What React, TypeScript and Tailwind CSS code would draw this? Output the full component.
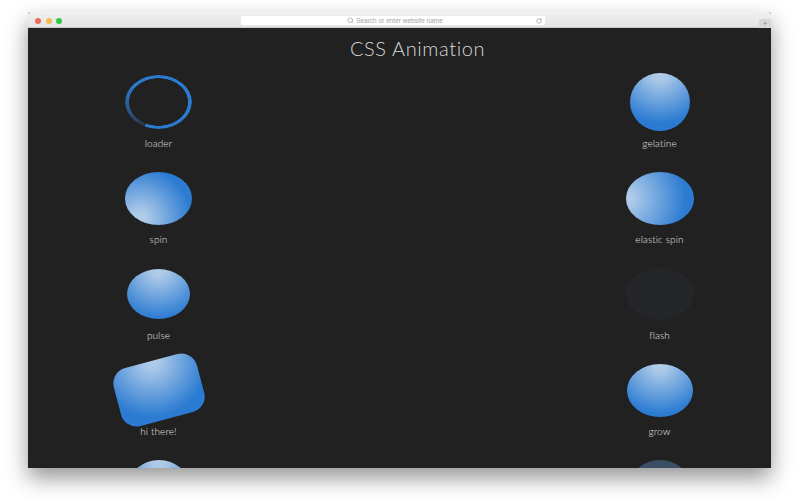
import { RotateCw, Search } from 'lucide-react';

const top = 'bg-[radial-gradient(circle_at_50%_0%,#b2cde9_0px,#aac8e8_8px,#2b7bd2_50px)]';

const left = [
  { label: 'loader', shape: 'w-[67px] h-[54px] rounded-[50%] bg-[conic-gradient(from_209deg,#2a3540,#2a7bd0_95deg,#2a7bd0_360deg)] [mask-image:radial-gradient(closest-side,transparent_87%,black_89%)]' },
  { label: 'spin', shape: 'w-[67px] h-[53px] rounded-[50%] bg-[radial-gradient(circle_at_22%_88%,#b2cde9_0px,#aac8e8_8px,#2b7bd2_52px)]' },
  { label: 'pulse', shape: `w-[63px] h-[50px] rounded-[50%] ${top}` },
  { label: 'hi there!', shape: 'w-[86px] h-[60px] rounded-[16px] -rotate-[15deg] bg-[radial-gradient(circle_at_50%_0%,#b2cde9_0px,#aac8e8_8px,#2b7bd2_56px)]' },
  { label: '', shape: `w-[60px] h-[52px] rounded-[50%] ${top}` },
];

const right = [
  { label: 'gelatine', shape: `w-[60px] h-[58px] rounded-[50%] ${top}` },
  { label: 'elastic spin', shape: 'w-[68px] h-[53px] rounded-[50%] bg-[radial-gradient(circle_at_0%_50%,#b2cde9_0px,#aac8e8_8px,#2b7bd2_60px)]' },
  { label: 'flash', shape: 'w-[68px] h-[52px] rounded-[50%] bg-[#24262a]' },
  { label: 'grow', shape: `w-[66px] h-[53px] rounded-[50%] ${top}` },
  { label: '', shape: 'w-[60px] h-[52px] rounded-[50%] bg-[#3a4f66]' },
];

function Column({ items }: { items: { label: string; shape: string }[] }) {
  return (
    <div className="w-[201px] flex flex-col">
      {items.map((item, i) => (
        <div key={i} className="h-24 shrink-0 flex flex-col items-center">
          <div className="h-[72px] flex items-center justify-center">
            <div className={item.shape} />
          </div>
          <div className="text-[10px] leading-3 -mt-px font-light tracking-[0.1px] text-[#e0e0e0]">{item.label}</div>
        </div>
      ))}
    </div>
  );
}

export default function App() {
  return (
    <div className="w-[800px] h-[500px] bg-white overflow-hidden pt-3 px-7 font-['Lato',sans-serif]">
      <div className="w-[743px] h-[456px] flex flex-col overflow-hidden rounded-t-[3px] bg-[#212121] shadow-[0_10px_22px_rgba(0,0,0,0.42)]">
        <div className="h-4 shrink-0 pt-[2px] flex items-center bg-gradient-to-b from-[#f0f0f0] to-[#e4e4e4] border-b border-[#c9c9c9]">
          <div className="flex gap-[4.5px] ml-[7px] w-[206px]">
            <span className="w-[6px] h-[6px] rounded-full bg-[#ec6a5e]" />
            <span className="w-[6px] h-[6px] rounded-full bg-[#f4bf4f]" />
            <span className="w-[6px] h-[6px] rounded-full bg-[#34c749]" />
          </div>
          <div className="w-[304px] h-[9px] pl-1 bg-white rounded-[1px] flex items-center justify-center relative">
            <Search size={7} className="text-[#8c8c8c] mr-[2px]" />
            <span className="text-[6.5px] leading-[9px] text-[#a3a3a3] font-['Liberation_Sans',sans-serif]">Search or enter website name</span>
            <RotateCw size={6} className="absolute right-[3px] text-[#777777]" />
          </div>
          <div className="ml-auto w-3 h-[9px] mt-[5px] bg-[#d8d8d8] flex items-center justify-center text-[8px] leading-none text-[#888888]">+</div>
        </div>
        <div className="pt-[3px] pl-9 h-[38px] shrink-0 text-center text-[20px] leading-[34px] font-light tracking-[0.6px] text-[#d8d8d8]">CSS Animation</div>
        <div className="flex justify-between pl-[30px] pr-[11px]">
          <Column items={left} />
          <Column items={right} />
        </div>
      </div>
    </div>
  );
}
